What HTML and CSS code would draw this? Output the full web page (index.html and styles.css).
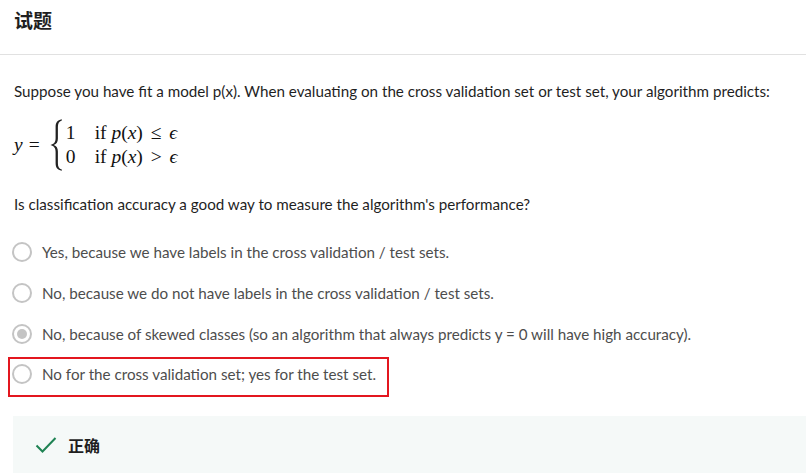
FILE: index.html
```html
<!DOCTYPE html>
<html lang="zh">
<head>
<meta charset="utf-8">
<link rel="stylesheet" href="styles.css">
</head>
<body>
<header class="top"><h1 class="title">试题</h1></header>
<main class="content">
  <p class="prompt">Suppose you have fit a model p(x). When evaluating on the cross validation set or test set, your algorithm predicts:</p>
  <div class="math">
    <span class="mi">y</span><span class="mo eq">=</span>
    <svg class="brace" width="14" height="54" viewBox="0 0 14 54"><path d="M12.8 1.2 C8.2 2.2 6.6 4.6 6.6 9 L6.6 20 C6.6 24 5 26 1.5 27 C5 28 6.6 30 6.6 34 L6.6 45 C6.6 49.4 8.2 51.8 12.8 52.8 L12.8 51.6 C9.8 50.7 8.9 48.6 8.9 45 L8.9 33.5 C8.9 30 7.6 28 4.8 27 C7.6 26 8.9 24 8.9 20.5 L8.9 9 C8.9 5.4 9.8 3.3 12.8 2.4 Z" fill="#222"/></svg>
    <div class="cases">
      <div class="row"><span class="num">1</span><span class="cond">if <span class="mi">p</span>(<span class="mi">x</span>) <span class="rel">≤</span> <span class="mi">ϵ</span></span></div>
      <div class="row"><span class="num">0</span><span class="cond">if <span class="mi">p</span>(<span class="mi">x</span>) <span class="rel">&gt;</span> <span class="mi">ϵ</span></span></div>
    </div>
  </div>
  <p class="question">Is classification accuracy a good way to measure the algorithm's performance?</p>
  <ul class="options">
    <li class="option"><span class="radio"></span><span class="label">Yes, because we have labels in the cross validation / test sets.</span></li>
    <li class="option"><span class="radio"></span><span class="label">No, because we do not have labels in the cross validation / test sets.</span></li>
    <li class="option"><span class="radio checked"></span><span class="label">No, because of skewed classes (so an algorithm that always predicts y = 0 will have high accuracy).</span></li>
    <li class="option marked"><span class="radio"></span><span class="label">No for the cross validation set; yes for the test set.</span></li>
  </ul>
  <div class="feedback">
    <svg class="check" width="22" height="18" viewBox="0 0 22 18"><path d="M1.5 9.5 L7.5 15.5 L20.5 2" fill="none" stroke="#1f8354" stroke-width="2"/></svg>
    <span class="result">正确</span>
  </div>
</main>
</body>
</html>
```
FILE: styles.css
```css
* { box-sizing: border-box; }
html, body { margin: 0; padding: 0; background: #fff; }
body {
  font-family: Lato, "Noto Sans CJK SC", sans-serif;
  color: #1f1f1f;
  width: 806px;
  height: 474px;
  overflow: hidden;
}
.top {
  height: 55px;
  border-bottom: 1px solid #e1e1e1;
  padding: 8px 14px 0;
}
.title {
  margin: 0;
  font-family: "Noto Sans CJK SC", sans-serif;
  font-size: 19px;
  font-weight: 700;
  line-height: 24px;
  color: #1f1f1f;
}
.content {
  padding: 0 0 0 14px;
}
.prompt {
  margin: 26px 0 0;
  font-size: 15.2px;
  line-height: 20px;
  color: #1f1f1f;
}
.math {
  display: flex;
  align-items: center;
  margin-top: 17px;
  height: 54px;
  font-family: "Liberation Serif", serif;
  font-size: 19.5px;
  color: #111;
}
.mi { font-style: italic; }
.eq { margin: 0 9px 0 6px; }
.brace { margin-left: 0; }
.cases {
  display: flex;
  flex-direction: column;
  margin-left: 3px;
  line-height: 24px;
}
.row { display: flex; }
.num { width: 29px; }
.rel { margin: 0 3px; }
.question {
  margin: 22px 0 0;
  font-size: 15.2px;
  line-height: 20px;
  color: #1f1f1f;
}
.options {
  list-style: none;
  margin: 17px 0 0 -6px;
  padding: 0;
}
.option {
  display: flex;
  align-items: center;
  height: 41px;
  padding-left: 0;
}
.radio {
  width: 20px;
  height: 20px;
  border: 2px solid #c4c4c4;
  border-radius: 50%;
  margin: 0 10px 0 -2px;
  flex: none;
  display: flex;
  align-items: center;
  justify-content: center;
}
.radio.checked::after {
  content: "";
  width: 10px;
  height: 10px;
  border-radius: 50%;
  background: #c4c4c4;
}
.option:first-child, .option:nth-child(2), .option:nth-child(3) { margin-left: 6px; }
.option .label {
  font-size: 15.2px;
  color: #4d4d4d;
  white-space: nowrap;
}
.option.marked {
  border: 2px solid #e3161f;
  width: 381px;
  height: 40px;
  margin-top: 3px;
  padding: 0 0 6px 4px;
}
.feedback {
  display: flex;
  align-items: center;
  margin: 19px 0 0 -1px;
  height: 57px;
  background: #f5f9f8;
  padding-left: 22px;
}
.check { margin-right: 11px; }
.result {
  font-family: "Noto Sans CJK SC", sans-serif;
  font-weight: 700;
  font-size: 16px;
  color: #1f1f1f;
}
```
